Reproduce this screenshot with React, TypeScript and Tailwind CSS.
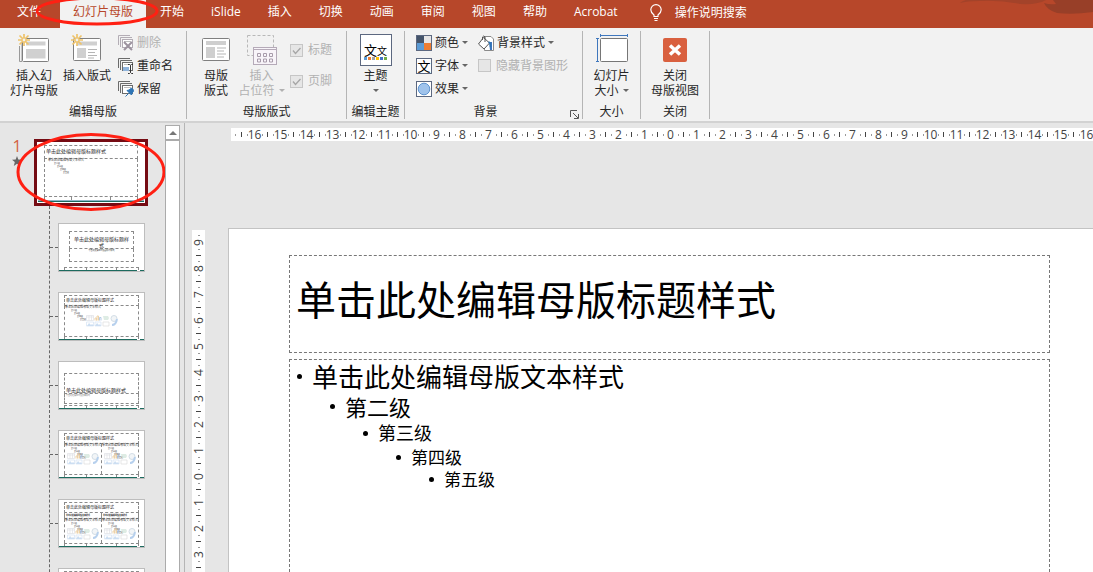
import React from 'react';

const TITLE = '单击此处编辑母版标题样式';
const BODY = '单击此处编辑母版文本样式';

const tabs = ['开始', 'iSlide', '插入', '切换', '动画', '审阅', '视图', '帮助', 'Acrobat'];

const levels = [
  { text: BODY, row: 'text-[26px] h-[33px]', indent: 'pl-[7px]' },
  { text: '第二级', row: 'text-[22px] h-[27px]', indent: 'pl-[40px]' },
  { text: '第三级', row: 'text-[18px] h-[26px]', indent: 'pl-[73px]' },
  { text: '第四级', row: 'text-[17px] h-[22px]', indent: 'pl-[106px]' },
  { text: '第五级', row: 'text-[17px] h-[22px]', indent: 'pl-[139px]' },
];

type LayoutKind = 'title' | 'content' | 'section' | 'two' | 'compare' | 'blank';

const layouts: { kind: LayoutKind; name: string }[] = [
  { kind: 'title', name: '标题幻灯片' },
  { kind: 'content', name: '标题和内容' },
  { kind: 'section', name: '节标题' },
  { kind: 'two', name: '两栏内容' },
  { kind: 'compare', name: '比较' },
  { kind: 'blank', name: '仅标题' },
];

/* ---------- icons ---------- */

function Spark() {
  return (
    <g stroke="#eec36b" strokeWidth="1.7">
      <path d="M6 0v12M0 6h12M1.5 1.5l9 9M10.5 1.5l-9 9" />
      <circle cx="6" cy="6" r="2" fill="#f2f2f2" strokeWidth="1.2" />
    </g>
  );
}

function InsertMasterIcon() {
  return (
    <svg width="32" height="32" viewBox="0 0 32 32" fill="none">
      <path d="M1.500 12v15.500H4M4 9v18" stroke="#9a9a9a" />
      <rect x="4.500" y="4.500" width="26" height="23" rx="1" fill="#fff" stroke="#7f7f7f" />
      <path d="M8 7.500h19.500v4H8zM8 15h19.500v9.500H8z" fill="#d0d0d0" />
      <Spark />
    </svg>
  );
}

function InsertLayoutIcon() {
  return (
    <svg width="32" height="32" viewBox="0 0 32 32" fill="none">
      <rect x="2.500" y="4.500" width="27" height="22" rx="1" fill="#fff" stroke="#7f7f7f" />
      <path d="M6 7.500h20v4H6zM6 14h9v10H6z" fill="#d0d0d0" />
      <path d="M17 15.500h9M17 18.500h7M17 21.500h9M17 24h6" stroke="#b5b5b5" />
      <Spark />
    </svg>
  );
}

function MasterLayoutIcon() {
  return (
    <svg width="32" height="32" viewBox="0 0 32 32" fill="none">
      <rect x="2.500" y="4.500" width="27" height="22" rx="1" fill="#fff" stroke="#7f7f7f" />
      <path d="M6 7h20v4H6zM6 13h9v11H6z" fill="#cfcfcf" />
      <path d="M17 14h9M17 17h7M17 20h9M17 23h7" stroke="#b5b5b5" />
    </svg>
  );
}

function PlaceholderIcon() {
  return (
    <svg width="32" height="32" viewBox="0 0 32 32" fill="none">
      <rect x="1.500" y="1.500" width="26" height="20" stroke="#b8b8b8" strokeDasharray="3 2" />
      <rect x="7.500" y="13.500" width="23" height="17" fill="#f8f4f9" stroke="#b5aab8" />
      <path d="M8 15.500h22" stroke="#b5aab8" />
      <path
        d="M11.500 19.500h3v3h-3zM17.500 19.500h3v3h-3zM23.500 19.500h3v3h-3zM11.500 25h3v3h-3zM17.500 25h3v3h-3zM23.500 25h3v3h-3z"
        stroke="#a89cab"
      />
    </svg>
  );
}

function ThemeIcon() {
  return (
    <span className="flex h-8 w-8 flex-col items-center justify-end border border-[#5c6880] bg-white pb-[5px]">
      <span className="flex items-end leading-none text-black">
        <span className="text-[13px] leading-[14px]">文</span>
        <span className="text-[10px] leading-[12px]">文</span>
      </span>
      <span className="flex gap-px">
        <span className="h-[3px] w-[3px] bg-[#5b9bd5]" />
        <span className="h-[3px] w-[3px] bg-[#ed7d31]" />
        <span className="h-[3px] w-[3px] bg-[#a5a5a5]" />
        <span className="h-[3px] w-[3px] bg-[#ffc000]" />
        <span className="h-[3px] w-[3px] bg-[#4472c4]" />
        <span className="h-[3px] w-[3px] bg-[#70ad47]" />
      </span>
    </span>
  );
}

function SlideSizeIcon() {
  return (
    <svg width="34" height="32" viewBox="0 0 34 32" fill="none">
      <path d="M5 1.500h28M5.500 0v3M32.500 0v3M2.500 4v24M1 4.500h3M1 27.500h3" stroke="#3f77bd" />
      <rect x="5.500" y="4.500" width="27" height="23" rx="1" fill="#fff" stroke="#767676" />
    </svg>
  );
}

function CloseMasterIcon() {
  return (
    <svg width="32" height="32" viewBox="0 0 32 32">
      <rect x="4" y="4" width="24" height="24" rx="2" fill="#d9603f" />
      <path d="M11 11.500l10 9M21 11.500l-10 9" stroke="#fff" strokeWidth="3.500" />
    </svg>
  );
}

function StackIcon({ kind }: { kind: 'delete' | 'rename' | 'keep' }) {
  const line = kind === 'delete' ? '#b3adb5' : '#6b6b6b';
  return (
    <svg width="16" height="16" viewBox="0 0 16 16" fill="none">
      <path d="M.5 10V.5H12M2.500 12V2.500H14" stroke={line} />
      <rect x="4.500" y="4.500" width="10" height="8" fill="#fff" stroke={line} />
      <path d="M6 6.500h7" stroke="#bdbdbd" />
      {kind === 'delete' && <path d="M6 7l8 8M14 7l-8 8" stroke="#9d939f" strokeWidth="2" />}
      {kind === 'rename' && (
        <>
          <rect x="5" y="9" width="6" height="4" fill="#8fb4dc" />
          <path d="M10 6.500h1.500l1 1 1-1H15M12.500 7.500v7M10 15.500h1.500l1-1 1 1H15" stroke="#333" />
        </>
      )}
      {kind === 'keep' && (
        <path d="M7.500 15.500l3-3M9 9.500l4.500 4.500.5-2 2-2.500-2.500-2.500-2.500 2z" stroke="#2e75b6" fill="#2e75b6" />
      )}
    </svg>
  );
}

function ColorsIcon() {
  return (
    <svg width="16" height="16" viewBox="0 0 16 16">
      <path d="M0 0h16v16H0z" fill="#5c6880" />
      <path d="M1 1h7v7H1z" fill="#44546a" />
      <path d="M8 1h7v7H8z" fill="#e7e6e6" />
      <path d="M1 8h7v7H1z" fill="#5b9bd5" />
      <path d="M8 8h7v7H8z" fill="#ed7d31" />
    </svg>
  );
}

function FontsIcon() {
  return (
    <span className="flex h-4 w-4 items-center justify-center border border-[#5c6880] bg-white text-[13px] leading-[14px] text-black">
      文
    </span>
  );
}

function EffectsIcon() {
  return (
    <svg width="16" height="16" viewBox="0 0 16 16">
      <rect x=".5" y=".5" width="15" height="15" fill="#fff" stroke="#5c6880" />
      <circle cx="8" cy="8" r="5.800" fill="#9fc3ec" stroke="#5d93cf" />
    </svg>
  );
}

function BucketIcon() {
  return (
    <svg width="16" height="16" viewBox="0 0 16 16" fill="none">
      <path d="M6.500 1.500H13l2.500 2.500v11.500h-9z" fill="#fff" stroke="#8a8a8a" />
      <path d="M11 7h3v8h-2z" fill="#3f77bd" />
      <path d="M5.500 2.500l6 5.500-5.500 6-5.500-5z" fill="#fff" stroke="#555" />
      <path d="M4.500 5V2q1.200-2 2.500 0v5" stroke="#555" />
      <path d="M10.500 7q2.500.5 2 5" stroke="#2e75b6" strokeWidth="1.500" />
    </svg>
  );
}

function Caret({ muted }: { muted?: boolean }) {
  return (
    <svg width="6" height="3" viewBox="0 0 6 3" className="shrink-0">
      <path d="M0 0h6L3 3z" fill={muted ? '#b1b1b1' : '#666'} />
    </svg>
  );
}

/* ---------- ribbon ---------- */

function Group({ label, className, launcher, children }: {
  label: string;
  className: string;
  launcher?: React.ReactNode;
  children: React.ReactNode;
}) {
  return (
    <section className={`mt-[3px] mb-[2px] flex shrink-0 flex-col border-r border-[#b5b5b5] ${className}`}>
      <div className="flex flex-1">{children}</div>
      <div className="flex h-[15px] items-end">
        <h2 className="flex-1 text-center text-xs leading-[15px] whitespace-nowrap">{label}</h2>
        {launcher}
      </div>
    </section>
  );
}

function BigButton({ icon, lines, caret, disabled, className }: {
  icon: React.ReactNode;
  lines: string[];
  caret?: boolean;
  disabled?: boolean;
  className: string;
}) {
  return (
    <button
      type="button"
      disabled={disabled}
      className={`flex flex-col items-center pt-[3px] text-xs leading-[15px] whitespace-nowrap disabled:text-[#b1b1b1] ${className}`}
    >
      {icon}
      {lines.map((line, i) => (
        <span key={line} className="flex h-[15px] items-center gap-1 first-of-type:mt-[2px]">
          {line}
          {caret && i === lines.length - 1 && <Caret muted={disabled} />}
        </span>
      ))}
    </button>
  );
}

function SmallButton({ icon, label, caret, disabled }: {
  icon: React.ReactNode;
  label: string;
  caret?: boolean;
  disabled?: boolean;
}) {
  return (
    <button
      type="button"
      disabled={disabled}
      className="flex h-[23px] items-center gap-[3px] text-xs whitespace-nowrap disabled:text-[#b1b1b1]"
    >
      {icon}
      {label}
      {caret && <Caret />}
    </button>
  );
}

function Check({ label, checked }: { label: string; checked?: boolean }) {
  return (
    <label className="flex items-center gap-[5px] text-xs whitespace-nowrap text-[#b1b1b1]">
      <span className="grid">
        <input
          type="checkbox"
          defaultChecked={checked}
          disabled
          className="h-[13px] w-[13px] appearance-none border border-[#c6c6c6] bg-[#e6e6e6] [grid-area:1/1]"
        />
        {checked && (
          <svg width="13" height="13" viewBox="0 0 13 13" className="[grid-area:1/1]">
            <path d="M3 6.500l2.500 3L10.500 4" fill="none" stroke="#a6a6a6" strokeWidth="1.300" />
          </svg>
        )}
      </span>
      {label}
    </label>
  );
}

function Ribbon() {
  return (
    <div className="flex h-[95px] shrink-0 border-b-2 border-[#d2d2d2] bg-[#f2f2f2]">
      <Group label="编辑母版" className="w-[187px]">
        <BigButton className="ml-1 w-[60px]" icon={<InsertMasterIcon />} lines={['插入幻', '灯片母版']} />
        <BigButton className="w-[46px]" icon={<InsertLayoutIcon />} lines={['插入版式']} />
        <div className="ml-2 flex flex-col">
          <SmallButton icon={<StackIcon kind="delete" />} label="删除" disabled />
          <SmallButton icon={<StackIcon kind="rename" />} label="重命名" />
          <SmallButton icon={<StackIcon kind="keep" />} label="保留" />
        </div>
      </Group>
      <Group label="母版版式" className="w-[160px]">
        <BigButton className="ml-2 w-[42px]" icon={<MasterLayoutIcon />} lines={['母版', '版式']} />
        <BigButton className="w-[49px]" icon={<PlaceholderIcon />} lines={['插入', '占位符']} caret disabled />
        <div className="ml-1 flex flex-col gap-[15px] pt-[11px]">
          <Check label="标题" checked />
          <Check label="页脚" checked />
        </div>
      </Group>
      <Group label="编辑主题" className="w-[58px]">
        <button type="button" className="flex flex-1 flex-col items-center pt-[3px] text-xs leading-[15px]">
          <ThemeIcon />
          <span className="mt-[2px] mb-[6px]">主题</span>
          <Caret />
        </button>
      </Group>
      <Group
        label="背景"
        className="w-[178px]"
        launcher={
          <button type="button" aria-label="背景设置" className="mr-[3px] ml-1">
            <svg width="9" height="9" viewBox="0 0 9 9" fill="none" stroke="#555">
              <path d="M.5 7V.5H7M3 3l5 5M8.500 4v4.500H4" />
            </svg>
          </button>
        }
      >
        <div className="ml-[11px] flex w-[62px] flex-col">
          <SmallButton icon={<ColorsIcon />} label="颜色" caret />
          <SmallButton icon={<FontsIcon />} label="字体" caret />
          <SmallButton icon={<EffectsIcon />} label="效果" caret />
        </div>
        <div className="flex flex-col">
          <SmallButton icon={<BucketIcon />} label="背景样式" caret />
          <div className="flex h-[23px] items-center">
            <Check label="隐藏背景图形" />
          </div>
        </div>
      </Group>
      <Group label="大小" className="w-[58px]">
        <BigButton className="flex-1" icon={<SlideSizeIcon />} lines={['幻灯片', '大小']} caret />
      </Group>
      <Group label="关闭" className="w-[69px]">
        <BigButton className="flex-1" icon={<CloseMasterIcon />} lines={['关闭', '母版视图']} />
      </Group>
    </div>
  );
}

function TabBar() {
  return (
    <nav className="relative flex h-7 shrink-0 gap-px bg-[#b7472a] text-xs text-white">
      <svg width="134" height="16" viewBox="0 0 134 16" className="absolute top-0 right-0">
        <path d="M1 3q2-2 6-3h80q-8 5-26 4-20-4-40-3-14 0-20 2z" fill="#a3432a" />
        <path d="M85 3q6 2 12 1l-3-4h40v12q-20 3-36 1-10-3-13-10z" fill="#983f28" />
      </svg>
      <button type="button" className="pr-[18px] pb-1 pl-[17px]">文件</button>
      <div className="relative flex">
        <button type="button" className="bg-[#f2f2f2] px-[13px] pb-1 text-[#b7472a]">幻灯片母版</button>
        <svg width="124" height="30" viewBox="0 0 124 30" className="pointer-events-none absolute -top-1 -left-6 z-10">
          <ellipse cx="61" cy="15" rx="60" ry="13" fill="none" stroke="#ff2013" strokeWidth="3" />
        </svg>
      </div>
      {tabs.map((tab) => (
        <button key={tab} type="button" className="px-[13px] pb-1">{tab}</button>
      ))}
      <button type="button" className="ml-[18px] flex items-center gap-[13px] pb-[3px] whitespace-nowrap">
        <svg width="12" height="17" viewBox="0 0 12 17" fill="none" stroke="#fff">
          <path d="M4 12.500V11Q.8 8.500.8 5.800a5.200 5.200 0 0110.400 0Q11.200 8.500 8 11v1.500zM4 14.500h4M4.500 16.500h3" strokeWidth="1.200" />
        </svg>
        操作说明搜索
      </button>
    </nav>
  );
}

/* ---------- slide list ---------- */

const dashed = 'border border-dashed border-[#8a8a8a]';

function MiniOutline({ className }: { className?: string }) {
  return (
    <div className={`flex flex-col text-[2px] leading-[3px] whitespace-nowrap text-[#444] ${className ?? ''}`}>
      <span className="text-[3px]">{BODY}</span>
      <span className="pl-[6px]">第二级</span>
      <span className="pl-[9px]">第三级</span>
      <span className="pl-[12px]">第四级</span>
      <span className="pl-[15px]">第五级</span>
    </div>
  );
}

function MiniObjects() {
  return (
    <svg width="32" height="12" viewBox="0 0 32 12" fill="none" className="absolute top-[9px] left-1/2 -translate-x-1/2 opacity-75">
      <path d="M.5.5h7v5h-7zM.5 2h7M3 .5v5M5.500.5v5" stroke="#d5d9de" strokeWidth=".7" />
      <path d="M9 5.500V3h1.500v2.500M11 5.500V1h1.500v4.500" stroke="#e8c48c" />
      <path d="M13.500 5.500V2.500h1.500v3" stroke="#9dbbe0" />
      <path d="M17 1h5l1 2-1 2h-4z" fill="#d3e6dc" />
      <circle cx="28" cy="3.500" r="3" stroke="#c5d3de" fill="#eef2f5" />
      <path d="M.5 7h7v4h-7zM9 7h6v4H9z" stroke="#c7daf0" strokeWidth=".7" />
      <path d="M1 11l2-3 2 2 1-1 2 2zM9 11l2-3 2 2 1-1 1 2z" fill="#bcd4ee" />
      <path d="M17 7h6v4h-6z" stroke="#d2d2d2" strokeWidth=".7" />
      <path d="M26 10q4 0 5-6" stroke="#9fc1e8" strokeWidth="2" />
    </svg>
  );
}

function MiniFooter() {
  return (
    <div>
      <div className="mx-[5px] flex h-[3px] border-x border-t border-dashed border-[#8a8a8a]">
        <span className="w-[22px] border-r border-dashed border-[#8a8a8a]" />
        <span className="flex-1" />
        <span className="w-[22px] border-l border-dashed border-[#8a8a8a]" />
      </div>
      <div className="flex h-px gap-[3px]">
        <span className="flex-1 bg-[#1d6b5f]" />
        <span className="w-1 bg-[#1d6b5f]" />
      </div>
    </div>
  );
}

function MiniLayout({ kind }: { kind: LayoutKind }) {
  if (kind === 'title') {
    return (
      <>
        <div className={`mx-[10px] mt-[7px] h-[18px] px-[3px] pt-[4px] text-center text-[5px] leading-[6px] ${dashed}`}>{TITLE}</div>
        <div className={`mx-[10px] h-[13px] border-t-0 text-center text-[2px] leading-[3px] ${dashed}`}>单击此处编辑母版副标题样式</div>
      </>
    );
  }
  if (kind === 'section') {
    return (
      <>
        <div className={`mx-[5px] mt-[11px] flex h-[21px] items-end pl-px text-[5px] leading-[6px] whitespace-nowrap ${dashed}`}>{TITLE}</div>
        <div className={`mx-[5px] h-[10px] border-t-0 pl-px text-[2px] leading-[3px] text-[#777] ${dashed}`}>{BODY}</div>
      </>
    );
  }
  if (kind === 'blank') {
    return <div className={`mx-[5px] mt-[2px] h-[11px] ${dashed}`} />;
  }
  return (
    <>
      <div className={`mx-[5px] mt-[2px] h-[11px] shrink-0 pl-px text-[4px] leading-[9px] whitespace-nowrap ${dashed}`}>{TITLE}</div>
      {kind === 'compare' && (
        <div className="mx-[5px] flex text-[2px] leading-[5px] font-bold whitespace-nowrap">
          <span className={`h-[6px] flex-1 border-t-0 pl-px ${dashed}`}>{BODY}</span>
          <span className={`h-[6px] flex-1 border-t-0 border-l-0 pl-px ${dashed}`}>{BODY}</span>
        </div>
      )}
      <div className="mx-[5px] flex min-h-0 flex-1">
        <div className={`relative min-w-0 flex-1 border-y-0 ${dashed}`}>
          <MiniOutline />
          <MiniObjects />
        </div>
        {kind !== 'content' && (
          <div className={`relative min-w-0 flex-1 border-y-0 border-l-0 ${dashed}`}>
            <MiniOutline />
            <MiniObjects />
          </div>
        )}
      </div>
    </>
  );
}

function SlideList() {
  return (
    <aside className="flex w-[185px] shrink-0 border-r border-[#b5b5b5] pt-[2px]">
      <div className="flex-1 overflow-hidden pt-[14px]">
        <div className="flex">
          <div className="flex w-[34px] shrink-0 flex-col items-center text-base leading-[14px] text-[#d35f42]">
            1
            <svg width="10" height="10" viewBox="0 0 10 10" className="mt-[3px]">
              <path d="M5 0l1.300 3.500L10 3.700 7.200 6l1 4L5 7.800 1.800 10l1-4L0 3.700l3.700-.2z" fill="#666" />
            </svg>
          </div>
          <div className="relative">
            <button type="button" aria-label="幻灯片母版" className="flex h-[67px] w-[114px] flex-col border-3 border-[#750b13] bg-white pt-[3px] text-left">
              <span className={`mx-[7px] block h-[14px] pl-px text-[5px] leading-[11px] whitespace-nowrap ${dashed}`}>{TITLE}</span>
              <span className={`mx-[7px] block flex-1 border-t-0 ${dashed}`}>
                <MiniOutline className="pl-[3px]" />
              </span>
              <span className="mx-[7px] flex h-[3px] border-x border-dashed border-[#8a8a8a]">
                <span className="w-[27px] border-r border-dashed border-[#8a8a8a]" />
                <span className="flex-1" />
                <span className="w-[27px] border-l border-dashed border-[#8a8a8a]" />
              </span>
              <span className="mx-px mb-px block h-[2px] border-t border-[#8fb4c8] bg-[#1d6b5f]" />
            </button>
            <svg width="152" height="80" viewBox="0 0 152 80" className="pointer-events-none absolute -top-[7px] -left-[19px] z-10">
              <ellipse cx="76" cy="40" rx="73" ry="37.500" fill="none" stroke="#ff2013" strokeWidth="3" />
            </svg>
          </div>
        </div>
        <ul className="ml-[49px] flex flex-col gap-5 border-l border-dashed border-[#666] pt-[17px]">
          {layouts.map((layout) => (
            <li key={layout.name} className="flex items-center">
              <span className="w-2 border-t border-dashed border-[#666]" />
              <button
                type="button"
                aria-label={layout.name}
                className="flex h-[49px] w-[87px] flex-col border border-[#bdbdbd] bg-white text-left"
              >
                <MiniLayout kind={layout.kind} />
                <span className="mt-auto block w-full shrink-0">
                  <MiniFooter />
                </span>
              </button>
            </li>
          ))}
        </ul>
      </div>
      <div className="mr-1 flex w-[15px] flex-col border border-b-0 border-[#ababab] bg-white">
        <button type="button" aria-label="向上滚动" className="flex h-[15px] items-center justify-center border-b-2 border-[#ababab]">
          <svg width="8" height="4" viewBox="0 0 8 4">
            <path d="M0 4h8L4 0z" fill="#777" />
          </svg>
        </button>
      </div>
    </aside>
  );
}

/* ---------- editor ---------- */

const hMarks = Array.from({ length: 33 }, (_, i) => Math.abs(i - 16));
const vMarks = Array.from({ length: 13 }, (_, i) => Math.abs(9 - i));

function HorizontalRuler() {
  return (
    <div className="mt-[5px] ml-[46px] flex h-[13px] shrink-0 items-center bg-white text-xs text-[#444]">
      <span className="mr-[5px] ml-1 h-[2px] w-px shrink-0 bg-[#999]" />
      {hMarks.map((n, i) => (
        <span key={i} className="flex w-[26px] shrink-0 items-center">
          <span className="h-[5px] w-px bg-[#444]" />
          <span className="flex flex-1 items-center justify-center">
            <span className="h-[2px] w-px bg-[#999]" />
            <span className="flex w-[14px] justify-center leading-[11px]">{n}</span>
            <span className="h-[2px] w-px bg-[#999]" />
          </span>
        </span>
      ))}
    </div>
  );
}

function VerticalRuler() {
  return (
    <div className="mt-[2px] mr-[23px] ml-[7px] flex w-[13px] shrink-0 flex-col bg-white text-xs text-[#444]">
      {vMarks.map((n, i) => (
        <span key={i} className="flex h-[26px] shrink-0 flex-col items-center">
          <span className="flex flex-1 flex-col items-center justify-center">
            <span className="h-px w-[2px] bg-[#999]" />
            <span className="flex h-[13px] w-[13px] -rotate-90 items-center justify-center leading-[13px]">{n}</span>
            <span className="h-px w-[2px] bg-[#999]" />
          </span>
          <span className="h-px w-[5px] bg-[#444]" />
        </span>
      ))}
    </div>
  );
}

function Slide() {
  return (
    <article className="flex min-w-0 flex-1 flex-col gap-[6px] border-t border-l border-[#c3c3c3] bg-white pt-[26px] pr-[43px] pl-[60px] text-black">
      <h1 className="flex h-[98px] shrink-0 items-center border border-dashed border-[#777] pb-2 pl-[6px] text-[40px] whitespace-nowrap">
        {TITLE}
      </h1>
      <ul className="flex-1 border border-b-0 border-dashed border-[#777] leading-none">
        {levels.map((level) => (
          <li key={level.text} className={`flex items-center whitespace-nowrap ${level.row} ${level.indent}`}>
            <span className="flex w-[15px] shrink-0">
              <span className="h-[5px] w-[5px] rounded-full bg-black" />
            </span>
            {level.text}
          </li>
        ))}
      </ul>
    </article>
  );
}

export default function App() {
  return (
    <div className="flex h-screen flex-col overflow-hidden bg-[#e6e6e6] font-['Open_Sans','Noto_Sans_CJK_SC',sans-serif] text-[#262626]">
      <TabBar />
      <Ribbon />
      <div className="flex min-h-0 flex-1">
        <SlideList />
        <main className="flex min-w-0 flex-1 flex-col">
          <HorizontalRuler />
          <div className="mt-[87px] flex min-h-0 flex-1">
            <VerticalRuler />
            <Slide />
          </div>
        </main>
      </div>
    </div>
  );
}
